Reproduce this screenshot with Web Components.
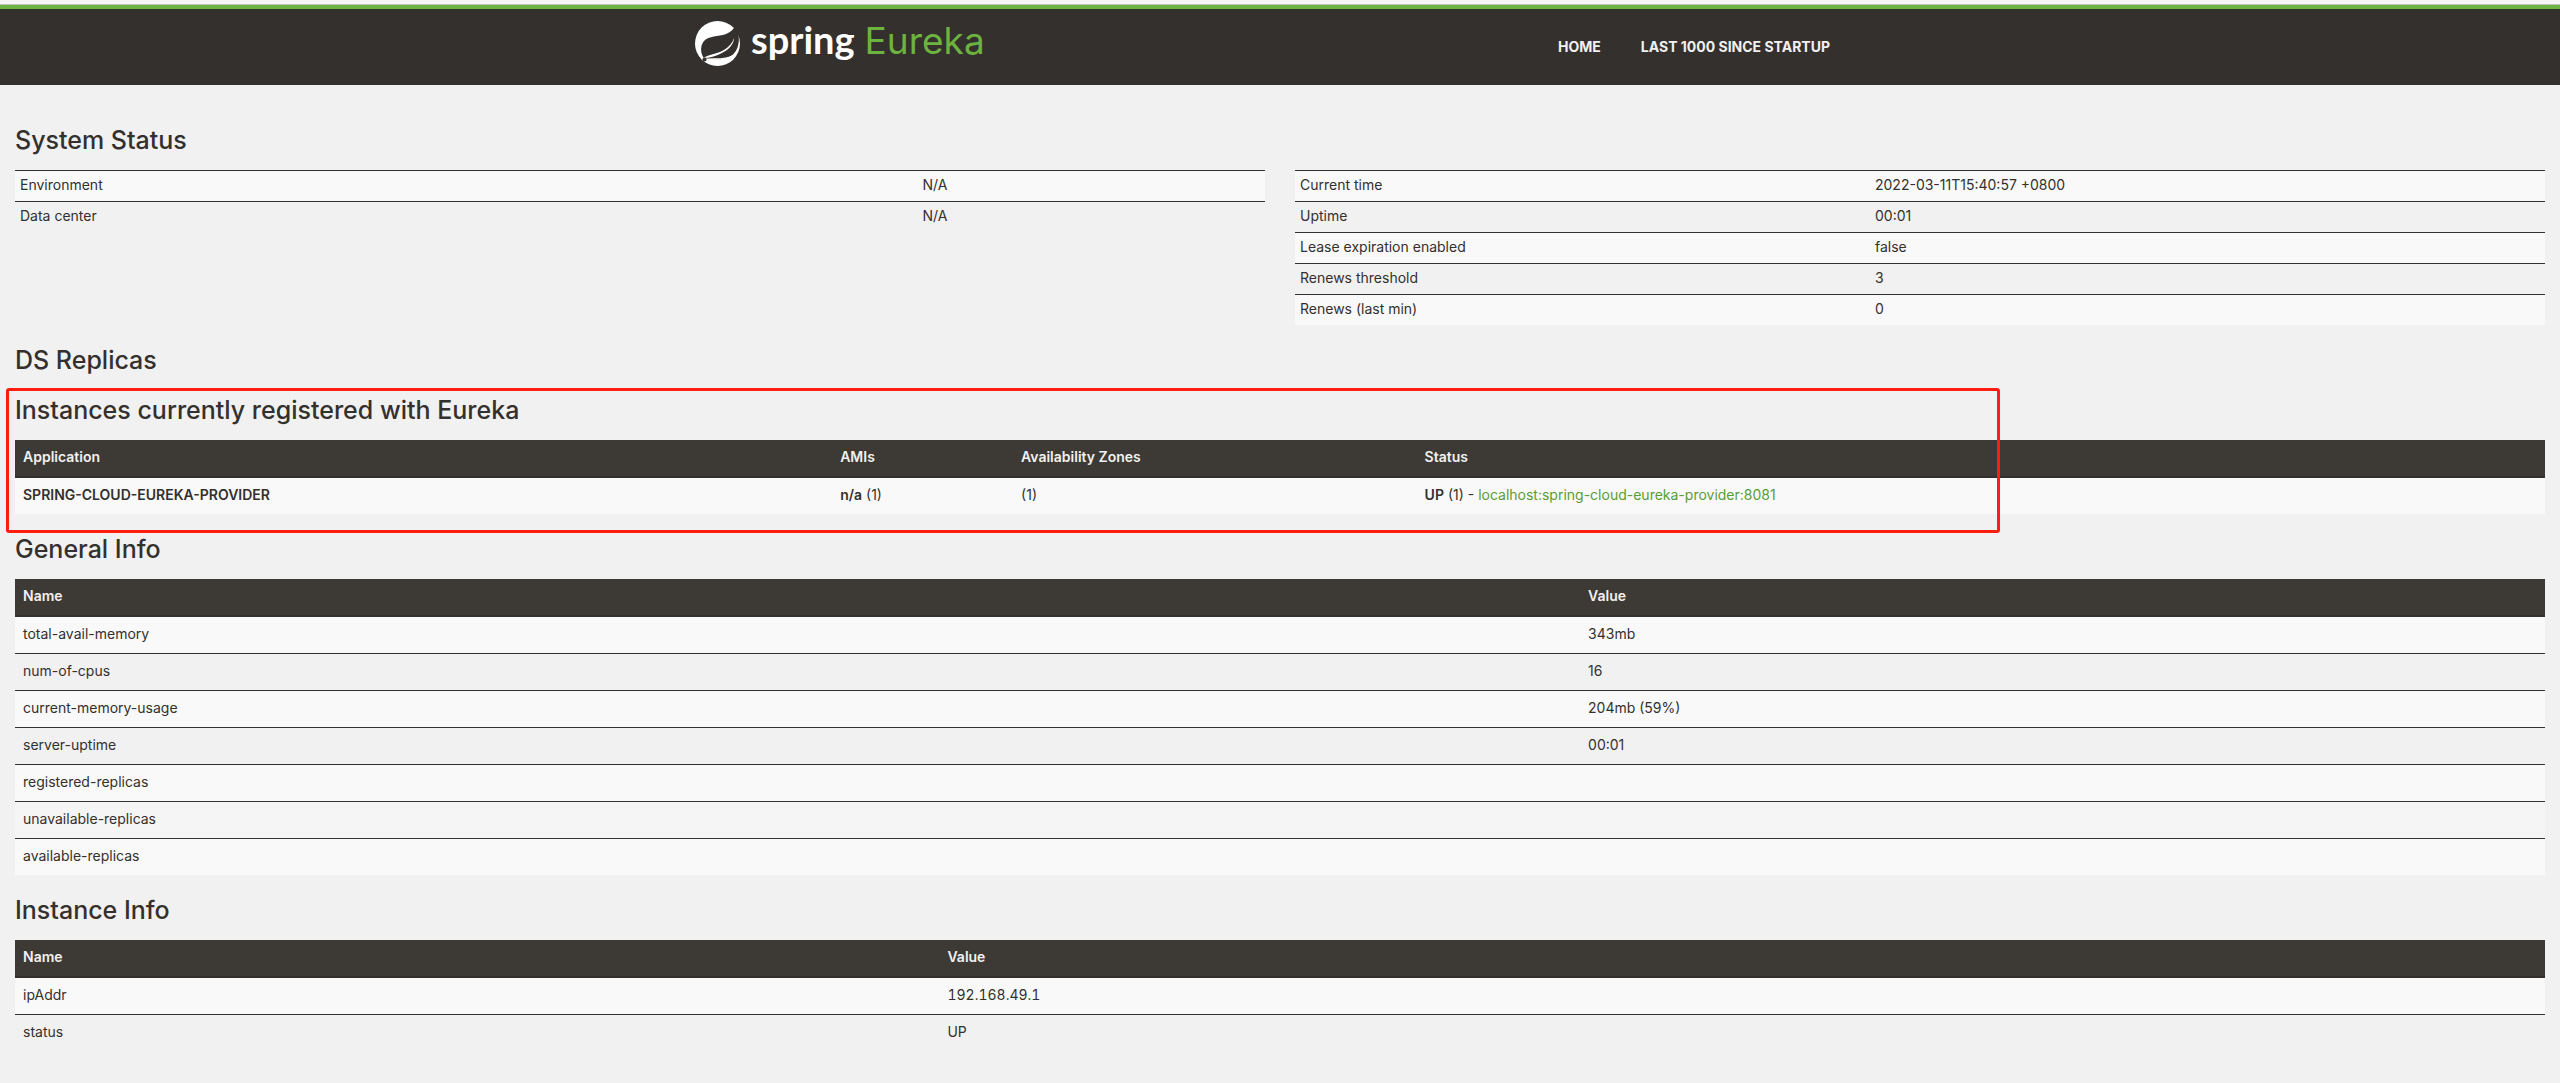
<!DOCTYPE html>
<html lang="en">
<head>
<meta charset="utf-8">
<title>Eureka</title>
<style>
  body { margin: 0; background: #f1f1f1; color: #34302d; font: 14px/20px Inter, "Open Sans", sans-serif; }
</style>
</head>
<body>
<eureka-page></eureka-page>

<script>
class SpringLogo extends HTMLElement {
  connectedCallback() {
    this.attachShadow({ mode: 'open' }).innerHTML = `
      <style>
        :host { display: block; }
        a { display: flex; align-items: flex-start; color: #fff; text-decoration: none; }
        svg { width: 46px; height: 46px; margin-right: 10px; }
        .words { display: flex; align-items: baseline; gap: 10px; }
        .brand { font: 700 38px/36px Lato, sans-serif; }
        .product { font: 400 37px/36px Inter, sans-serif; color: #6db33f; }
      </style>
      <a href="#" aria-label="Spring Eureka">
        <svg viewBox="0 0 46 46" aria-hidden="true">
          <circle cx="22.5" cy="22.5" r="22.5" fill="#fff"/>
          <path d="M41 2.500C39.500 7.500 36 11 31 13C23 16 14 14.500 9 20C5.500 24 5 31 8.500 36.500C10 38.200 14 38.200 20 38.200C27 38.500 34 37.500 38.500 33C46 25.500 44.500 13 41 2.500Z" fill="#34302d"/>
          <path d="M39.200 16.500C37.500 22 33.500 26.500 28 29.500C21 33 14 33.500 8.500 37C14.500 37 19 35.500 25 33C33 29.500 38.800 24 39.200 16.500Z" fill="#fff"/>
          <path d="M10 39C16 36.800 30 40 38 34.500" fill="none" stroke="#fff" stroke-width="1.500"/>
          <circle cx="9.500" cy="38.500" r="2" fill="#34302d"/>
        </svg>
        <span class="words"><span class="brand">spring</span><span class="product">Eureka</span></span>
      </a>`;
  }
}
customElements.define('spring-logo', SpringLogo);

class EurekaHeader extends HTMLElement {
  connectedCallback() {
    this.attachShadow({ mode: 'open' }).innerHTML = `
      <style>
        :host { display: block; background: #34302d; border-top: 4px solid #6db33f; }
        .container { display: flex; justify-content: space-between; align-items: flex-start;
          box-sizing: border-box; width: 1170px; max-width: 100%; margin: 0 auto; height: 76px; padding-top: 12px; }
        nav { display: flex; padding-top: 16px; margin-right: 35px; gap: 40px; }
        nav a { color: #f1f1f1; text-decoration: none; text-transform: uppercase; font-weight: 700; }
      </style>
      <header class="container">
        <spring-logo></spring-logo>
        <nav><a href="#">Home</a><a href="#">Last 1000 since startup</a></nav>
      </header>`;
  }
}
customElements.define('eureka-header', EurekaHeader);

class SectionTitle extends HTMLElement {
  connectedCallback() {
    this.attachShadow({ mode: 'open' }).innerHTML = `
      <style>
        :host { display: block; }
        h1 { margin: 0; padding: 5px 0 15px; font-size: 25px; line-height: 30px; font-weight: 500; }
      </style>
      <h1><slot></slot></h1>`;
  }
}
customElements.define('section-title', SectionTitle);

const tableData = {
  environment: { cols: [72.2, 27.8], rows: [['Environment', 'N/A'], ['Data center', 'N/A']] },
  status: { cols: [46, 54], rows: [
    ['Current time', '2022-03-11T15:40:57 +0800'], ['Uptime', '00:01'],
    ['Lease expiration enabled', 'false'], ['Renews threshold', '3'], ['Renews (last min)', '0']] },
  instances: { cols: [32.3, 7.15, 15.95, 44.6], head: ['Application', 'AMIs', 'Availability Zones', 'Status'], rows: [
    ['<b>SPRING-CLOUD-EUREKA-PROVIDER</b>', '<b>n/a</b> (1)', '(1)',
     '<b>UP</b> (1) - <a href="#">localhost:spring-cloud-eureka-provider:8081</a>']] },
  general: { cols: [61.86, 38.14], head: ['Name', 'Value'], rows: [
    ['total-avail-memory', '343mb'], ['num-of-cpus', '16'], ['current-memory-usage', '204mb (59%)'],
    ['server-uptime', '00:01'], ['registered-replicas', ''], ['unavailable-replicas', ''], ['available-replicas', '']] },
  instance: { cols: [36.54, 63.46], head: ['Name', 'Value'], rows: [['ipAddr', '192.168.49.1'], ['status', 'UP']] }
};

class DataTable extends HTMLElement {
  connectedCallback() {
    const { cols, head, rows } = tableData[this.getAttribute('name')];
    const muted = this.getAttribute('muted');
    this.attachShadow({ mode: 'open' }).innerHTML = `
      <style>
        :host { display: block; margin-bottom: 15px; }
        :host([tabular]) { font-variant-numeric: tabular-nums; }
        table { width: 100%; table-layout: fixed; border-collapse: separate; border-spacing: 0; }
        th { text-align: left; padding: 7px 8px 9px; background: #3d3935; color: #f1f1f1; font-weight: 600; border-bottom: 2px solid #34302d; }
        td { padding: 7px 8px 9px; height: 20px; border-top: 1px solid #34302d; }
        thead + tbody tr:first-child td { border-top: 0; }
        tbody tr:nth-child(odd) { background: #f9f9f9; }
        tbody tr.soft { background: #f5f5f5; }
        :host([condensed]) td { padding: 4px 5px 6px; }
        b { font-weight: 600; }
        a { color: #5a9e33; text-decoration: none; }
      </style>
      <table>
        <colgroup>${cols.map(c => `<col style="width:${c}%">`).join('')}</colgroup>
        ${head ? `<thead><tr>${head.map(h => `<th scope="col">${h}</th>`).join('')}</tr></thead>` : ''}
        <tbody>${rows.map((r, i) => `<tr${String(i) === muted ? ' class="soft"' : ''}>${r.map(c => `<td>${c}</td>`).join('')}</tr>`).join('')}</tbody>
      </table>`;
  }
}
customElements.define('data-table', DataTable);

class MarkedSection extends HTMLElement {
  connectedCallback() {
    this.attachShadow({ mode: 'open' }).innerHTML = `
      <style>
        :host { display: block; position: relative; }
        .mark { position: absolute; box-sizing: border-box; left: -9px; top: -2px; bottom: -19px; width: 78.8%;
          border: 3px solid #ff1d12; border-radius: 3px; pointer-events: none; }
      </style>
      <slot></slot><div class="mark"></div>`;
  }
}
customElements.define('marked-section', MarkedSection);

class EurekaPage extends HTMLElement {
  connectedCallback() {
    this.attachShadow({ mode: 'open' }).innerHTML = `
      <style>
        :host { display: block; }
        .edge { height: 4px; background: #f5f5f5; border-bottom: 1px solid #c2c2c2; }
        main { padding: 35px 15px 20px; }
        section.gap { padding-top: 15px; }
        .split { display: grid; grid-template-columns: 1fr 1fr; gap: 30px; align-items: start; }
        marked-section { margin-bottom: 15px; }
        marked-section data-table, .split data-table { margin-bottom: 0; }
      </style>
      <div class="edge"></div>
      <eureka-header></eureka-header>
      <main>
        <section>
          <section-title>System Status</section-title>
          <div class="split">
            <data-table name="environment" condensed></data-table>
            <data-table name="status" condensed></data-table>
          </div>
        </section>
        <section class="gap"><section-title>DS Replicas</section-title></section>
        <marked-section>
          <section-title>Instances currently registered with Eureka</section-title>
          <data-table name="instances"></data-table>
        </marked-section>
        <section>
          <section-title>General Info</section-title>
          <data-table name="general" muted="5"></data-table>
        </section>
        <section>
          <section-title>Instance Info</section-title>
          <data-table name="instance" tabular></data-table>
        </section>
      </main>`;
  }
}
customElements.define('eureka-page', EurekaPage);
</script>
</body>
</html>
